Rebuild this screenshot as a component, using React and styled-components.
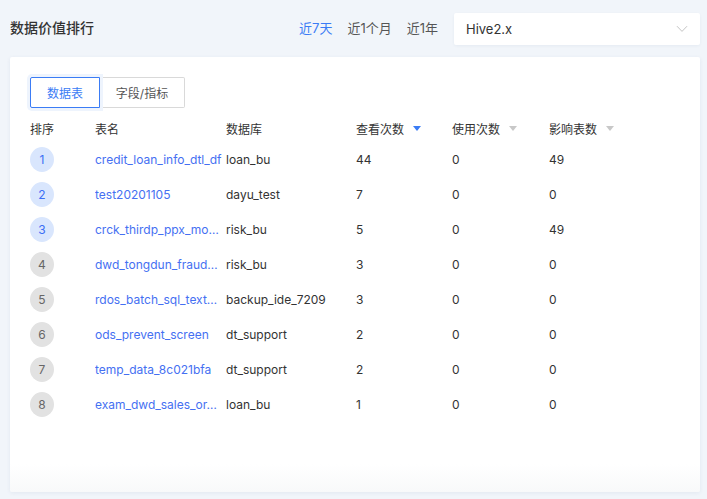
import React, { useState } from "react";
import styled, { createGlobalStyle } from "styled-components";

const Global = createGlobalStyle`
  html, body { margin: 0; padding: 0; background: #f1f5fa; }
  body { font-family: "Inter", "Noto Sans CJK SC", sans-serif; color: #333; }
  * { box-sizing: border-box; }
`;

const Page = styled.div`
  width: 707px;
  height: 499px;
  padding: 13px 7px 7px 10px;
  display: flex;
  flex-direction: column;
`;

const Header = styled.div`
  display: flex;
  align-items: center;
  height: 32px;
  margin-bottom: 12px;
`;

const Title = styled.div`
  font-size: 14px;
  font-weight: 500;
  color: #333;
  flex: 1;
  margin-top: -4px;
`;

const Tabs = styled.div`
  display: flex;
  gap: 15px;
  margin-right: 16px;
  margin-top: -4px;
`;

const Tab = styled.span`
  font-size: 13px;
  color: ${(p) => (p.$active ? "#3b7cf5" : "#555")};
  cursor: pointer;
`;

const Select = styled.div`
  width: 246px;
  height: 32px;
  background: #fff;
  border-radius: 2px;
  box-shadow: 0 1px 3px rgba(30, 60, 120, 0.06);
  display: flex;
  align-items: center;
  justify-content: space-between;
  padding: 0 12px 0 12px;
  font-size: 13px;
  color: #333;
`;

const Card = styled.div`
  flex: 1;
  background: linear-gradient(to bottom, #fff calc(100% - 28px), #f8f9fa);
  border-radius: 2px;
  box-shadow: 0 1px 4px rgba(30, 60, 120, 0.07);
  padding: 20px 20px 0 20px;
`;

const Segment = styled.div`
  display: flex;
  margin-bottom: 6px;
`;

const SegButton = styled.button`
  height: 31px;
  width: ${(p) => p.$w}px;
  font-family: inherit;
  font-size: 12px;
  background: #fff;
  color: ${(p) => (p.$active ? "#3b7cf5" : "#555")};
  border: 1px solid ${(p) => (p.$active ? "#3b7cf5" : "#d9d9d9")};
  border-left-width: ${(p) => (p.$active ? 1 : 0)}px;
  border-radius: ${(p) => (p.$active ? "2px 0 0 2px" : "0 2px 2px 0")};
  box-shadow: ${(p) => (p.$active ? "0 0 0 3px #eef4fd" : "none")};
  position: relative;
  z-index: ${(p) => (p.$active ? 1 : 0)};
  padding: 0;
  cursor: pointer;
`;

const Row = styled.div`
  display: grid;
  grid-template-columns: 65px 131px 130px 96px 97px 1fr;
  align-items: center;
  height: ${(p) => (p.$head ? 28 : 35)}px;
  font-size: 12px;
  color: #333;
`;

const HeadCell = styled.div`
  display: flex;
  align-items: center;
  gap: 9px;
`;

const Caret = styled.span`
  width: 0;
  height: 0;
  border-left: 4px solid transparent;
  border-right: 4px solid transparent;
  border-top: 5px solid ${(p) => (p.$active ? "#3b7cf5" : "#c8c8c8")};
  margin-top: 1px;
`;

const Rank = styled.div`
  width: 24px;
  height: 25px;
  border-radius: 50%;
  display: flex;
  align-items: center;
  justify-content: center;
  font-size: 12px;
  background: ${(p) => (p.$top ? "#d9e6fd" : "#e2e2e2")};
  color: ${(p) => (p.$top ? "#3b6ff5" : "#666")};
`;

const Name = styled.a`
  color: #4570f2;
  white-space: nowrap;
  overflow: hidden;
  text-overflow: ellipsis;
  text-decoration: none;
  padding-right: 4px;
  cursor: pointer;
`;

const Cell = styled.div`
  white-space: nowrap;
  overflow: hidden;
  text-overflow: ellipsis;
`;

const Chevron = () => (
  <svg width="12" height="8" viewBox="0 0 12 8" fill="none">
    <path d="M1 1.2 L6 6.4 L11 1.2" stroke="#c4c4c4" strokeWidth="1" />
  </svg>
);

const rows = [
  ["credit_loan_info_dtl_df", "loan_bu", 44, 0, 49],
  ["test20201105", "dayu_test", 7, 0, 0],
  ["crck_thirdp_ppx_mo…", "risk_bu", 5, 0, 49],
  ["dwd_tongdun_fraud…", "risk_bu", 3, 0, 0],
  ["rdos_batch_sql_text…", "backup_ide_7209", 3, 0, 0],
  ["ods_prevent_screen", "dt_support", 2, 0, 0],
  ["temp_data_8c021bfa", "dt_support", 2, 0, 0],
  ["exam_dwd_sales_or…", "loan_bu", 1, 0, 0],
];

export default function App() {
  const [range, setRange] = useState(0);
  const [seg, setSeg] = useState(0);
  const ranges = ["近7天", "近1个月", "近1年"];
  return (
    <>
      <Global />
      <Page>
        <Header>
          <Title>数据价值排行</Title>
          <Tabs>
            {ranges.map((r, i) => (
              <Tab key={r} $active={i === range} onClick={() => setRange(i)}>
                {r}
              </Tab>
            ))}
          </Tabs>
          <Select>
            <span>Hive2.x</span>
            <Chevron />
          </Select>
        </Header>
        <Card>
          <Segment>
            <SegButton $w={70} $active={seg === 0} onClick={() => setSeg(0)}>
              数据表
            </SegButton>
            <SegButton $w={85} $active={seg === 1} onClick={() => setSeg(1)}>
              字段/指标
            </SegButton>
          </Segment>
          <Row $head>
            <HeadCell>排序</HeadCell>
            <HeadCell>表名</HeadCell>
            <HeadCell>数据库</HeadCell>
            <HeadCell>
              查看次数 <Caret $active />
            </HeadCell>
            <HeadCell>
              使用次数 <Caret />
            </HeadCell>
            <HeadCell>
              影响表数 <Caret />
            </HeadCell>
          </Row>
          {rows.map((r, i) => (
            <Row key={i}>
              <Rank $top={i < 3}>{i + 1}</Rank>
              <Name>{r[0]}</Name>
              <Cell>{r[1]}</Cell>
              <Cell>{r[2]}</Cell>
              <Cell>{r[3]}</Cell>
              <Cell>{r[4]}</Cell>
            </Row>
          ))}
        </Card>
      </Page>
    </>
  );
}
